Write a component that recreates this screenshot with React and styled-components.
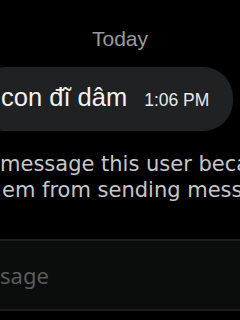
import React from "react";
import styled, { createGlobalStyle } from "styled-components";

const Global = createGlobalStyle`
  html, body { margin: 0; padding: 0; background: #000; }
  body { width: 240px; height: 320px; overflow: hidden; }
  #root { width: 240px; height: 320px; overflow: hidden; }
`;

const Screen = styled.div`
  width: 240px;
  height: 320px;
  background: #000;
  display: flex;
  flex-direction: column;
  overflow: hidden;
`;

const DayLabel = styled.div`
  margin-top: 27px;
  text-align: center;
  font-family: "Liberation Sans", Arial, sans-serif;
  font-size: 21px;
  line-height: 24px;
  color: #9a9a9a;
`;

const Bubble = styled.div`
  align-self: flex-start;
  margin-top: 16px;
  margin-left: -24px;
  height: 64px;
  padding: 0 24px 0 25px;
  background: #202123;
  border-radius: 30px;
  display: flex;
  align-items: center;
  white-space: nowrap;
`;

const BubbleLine = styled.div`
  line-height: 30px;
  font-family: "Liberation Sans", Arial, sans-serif;
  color: #f2f2f2;
`;

const MessageText = styled.span`
  font-size: 25.5px;
`;

const Time = styled.span`
  margin-left: 17px;
  font-size: 17.5px;
  color: #e7e9ea;
`;

const Notice = styled.div`
  margin-top: 20px;
  font-family: "DejaVu Sans", sans-serif;
  font-size: 21px;
  line-height: 26px;
  color: #c6c7c8;
  white-space: nowrap;
`;

const NoticeLine = styled.div`
  padding-left: ${(p) => p.$indent || 0}px;
`;

const Composer = styled.div`
  margin-top: 36px;
  height: 68px;
  background: #0b0c0c;
  border-top: 2px solid #1c1d1e;
  border-bottom: 2px solid #1c1d1e;
  display: flex;
  align-items: center;
`;

const Placeholder = styled.span`
  font-family: "Noto Sans", sans-serif;
  font-size: 22px;
  line-height: 30px;
  color: #5a5b5c;
  white-space: nowrap;
`;

export default function App() {
  return (
    <>
      <Global />
      <Screen>
        <DayLabel>Today</DayLabel>
        <Bubble>
          <BubbleLine>
            <MessageText>con đĩ dâm</MessageText>
            <Time>1:06 PM</Time>
          </BubbleLine>
        </Bubble>
        <Notice>
          <NoticeLine>message this user beca</NoticeLine>
          <NoticeLine $indent={2}>em from sending mess</NoticeLine>
        </Notice>
        <Composer>
          <Placeholder>sage</Placeholder>
        </Composer>
      </Screen>
    </>
  );
}
